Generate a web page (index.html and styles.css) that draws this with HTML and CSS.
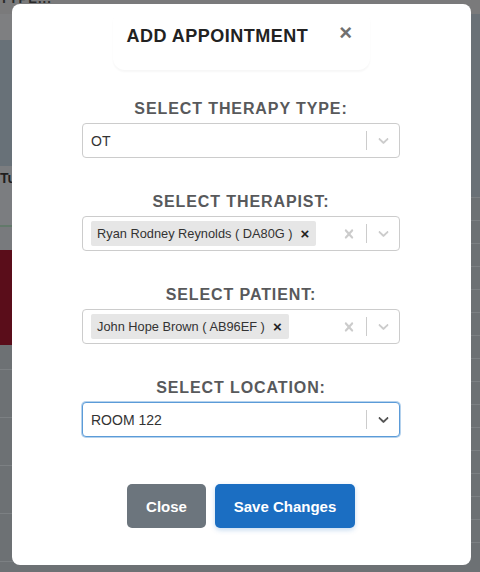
FILE: index.html
```html
<!DOCTYPE html>
<html lang="en">
<head>
<meta charset="utf-8">
<title>Add Appointment</title>
<link rel="stylesheet" href="styles.css">
</head>
<body>
<div class="page">
  <div class="col col-left">
    <div class="band b-top"><span class="toptext">TYPE...</span></div>
    <div class="band b1"></div>
    <div class="band b2"></div>
    <div class="band b3"><span class="tu">Tu</span></div>
    <div class="band b-line"></div>
    <div class="band b4"></div>
    <div class="band b-red"></div>
    <div class="band b5"></div>
    <div class="band row-l"></div>
    <div class="band row-l"></div>
    <div class="band row-l"></div>
    <div class="band row-l"></div>
    <div class="band row-l"></div>
  </div>
  <div class="col col-right">
    <div class="band b-top"></div>
    <div class="band r1"></div>
    <div class="band row-r"></div>
    <div class="band row-r"></div>
    <div class="band row-r"></div>
    <div class="band row-r"></div>
    <div class="band row-r"></div>
    <div class="band row-r"></div>
    <div class="band row-r"></div>
    <div class="band row-r"></div>
    <div class="band row-r"></div>
    <div class="band row-r"></div>
    <div class="band row-r"></div>
    <div class="band row-r"></div>
    <div class="band row-r"></div>
    <div class="band row-r"></div>
    <div class="band row-r"></div>
    <div class="band row-r"></div>
  </div>
</div>

<div class="modal">
  <div class="modal-header">
    <h2 class="title">ADD APPOINTMENT</h2>
    <span class="close-x">&times;</span>
  </div>

  <div class="fields">
    <div class="field">
      <div class="label">SELECT THERAPY TYPE:</div>
      <div class="select">
        <div class="value">OT</div>
        <div class="indicators">
          <span class="sep"></span>
          <span class="dropdown"><svg viewBox="0 0 20 20" class="chev"><path d="M4.516 7.548c0.436-0.446 1.043-0.481 1.576 0l3.908 3.747 3.908-3.747c0.533-0.481 1.141-0.446 1.574 0 0.436 0.445 0.408 1.197 0 1.615-0.406 0.418-4.695 4.502-4.695 4.502-0.217 0.223-0.502 0.335-0.787 0.335s-0.57-0.112-0.789-0.335c0 0-4.287-4.084-4.695-4.502s-0.436-1.17 0-1.615z"/></svg></span>
        </div>
      </div>
    </div>

    <div class="field">
      <div class="label">SELECT THERAPIST:</div>
      <div class="select">
        <div class="value multi"><span class="tag"><span class="tag-text">Ryan Rodney Reynolds ( DA80G )</span><span class="tag-x">&times;</span></span></div>
        <div class="indicators">
          <span class="clear"><svg viewBox="0 0 20 20" class="cross"><path d="M14.348 14.849c-0.469 0.469-1.229 0.469-1.697 0l-2.651-3.030-2.651 3.029c-0.469 0.469-1.229 0.469-1.697 0-0.469-0.469-0.469-1.229 0-1.697l2.758-3.150-2.759-3.152c-0.469-0.469-0.469-1.228 0-1.697s1.228-0.469 1.697 0l2.652 3.031 2.651-3.031c0.469-0.469 1.228-0.469 1.697 0s0.469 1.229 0 1.697l-2.758 3.152 2.758 3.150c0.469 0.469 0.469 1.229 0 1.698z"/></svg></span>
          <span class="sep"></span>
          <span class="dropdown"><svg viewBox="0 0 20 20" class="chev"><path d="M4.516 7.548c0.436-0.446 1.043-0.481 1.576 0l3.908 3.747 3.908-3.747c0.533-0.481 1.141-0.446 1.574 0 0.436 0.445 0.408 1.197 0 1.615-0.406 0.418-4.695 4.502-4.695 4.502-0.217 0.223-0.502 0.335-0.787 0.335s-0.57-0.112-0.789-0.335c0 0-4.287-4.084-4.695-4.502s-0.436-1.170 0-1.615z"/></svg></span>
        </div>
      </div>
    </div>

    <div class="field">
      <div class="label">SELECT PATIENT:</div>
      <div class="select">
        <div class="value multi"><span class="tag"><span class="tag-text">John Hope Brown ( AB96EF )</span><span class="tag-x">&times;</span></span></div>
        <div class="indicators">
          <span class="clear"><svg viewBox="0 0 20 20" class="cross"><path d="M14.348 14.849c-0.469 0.469-1.229 0.469-1.697 0l-2.651-3.030-2.651 3.029c-0.469 0.469-1.229 0.469-1.697 0-0.469-0.469-0.469-1.229 0-1.697l2.758-3.150-2.759-3.152c-0.469-0.469-0.469-1.228 0-1.697s1.228-0.469 1.697 0l2.652 3.031 2.651-3.031c0.469-0.469 1.228-0.469 1.697 0s0.469 1.229 0 1.697l-2.758 3.152 2.758 3.150c0.469 0.469 0.469 1.229 0 1.698z"/></svg></span>
          <span class="sep"></span>
          <span class="dropdown"><svg viewBox="0 0 20 20" class="chev"><path d="M4.516 7.548c0.436-0.446 1.043-0.481 1.576 0l3.908 3.747 3.908-3.747c0.533-0.481 1.141-0.446 1.574 0 0.436 0.445 0.408 1.197 0 1.615-0.406 0.418-4.695 4.502-4.695 4.502-0.217 0.223-0.502 0.335-0.787 0.335s-0.57-0.112-0.789-0.335c0 0-4.287-4.084-4.695-4.502s-0.436-1.170 0-1.615z"/></svg></span>
        </div>
      </div>
    </div>

    <div class="field">
      <div class="label">SELECT LOCATION:</div>
      <div class="select focused">
        <div class="value">ROOM 122</div>
        <div class="indicators">
          <span class="sep"></span>
          <span class="dropdown"><svg viewBox="0 0 20 20" class="chev"><path d="M4.516 7.548c0.436-0.446 1.043-0.481 1.576 0l3.908 3.747 3.908-3.747c0.533-0.481 1.141-0.446 1.574 0 0.436 0.445 0.408 1.197 0 1.615-0.406 0.418-4.695 4.502-4.695 4.502-0.217 0.223-0.502 0.335-0.787 0.335s-0.57-0.112-0.789-0.335c0 0-4.287-4.084-4.695-4.502s-0.436-1.170 0-1.615z"/></svg></span>
        </div>
      </div>
    </div>
  </div>

  <div class="actions">
    <button class="btn btn-secondary" type="button">Close</button>
    <button class="btn btn-primary" type="button">Save Changes</button>
  </div>
</div>
</body>
</html>
```

FILE: styles.css
```css
* { box-sizing: border-box; }

html, body {
  margin: 0;
  padding: 0;
  width: 480px;
  height: 572px;
  overflow: hidden;
  font-family: "Liberation Sans", Arial, sans-serif;
  background: #6d7174;
}

/* ---------- dimmed page behind the modal ---------- */
.page {
  display: flex;
  width: 480px;
  height: 572px;
}
.col {
  width: 240px;
  display: flex;
  flex-direction: column;
  overflow: hidden;
}
.band { flex: none; }
.b-top {
  height: 14px;
  background: #7a7a7b;
  overflow: hidden;
}
.toptext {
  display: block;
  margin-top: -8px;
  font-size: 13px;
  line-height: 14px;
  font-weight: bold;
  color: #2a2a2a;
  letter-spacing: 1px;
}
.b1 { height: 26px; background: #7e7f81; }
.b2 { height: 126px; background: #687178; }
.b3 {
  height: 59px;
  background: #7b7d80;
  padding-top: 3px;
}
.tu {
  font-size: 14px;
  font-weight: bold;
  color: #1f1f1f;
}
.b-line { height: 2px; background: #62796a; }
.b4 { height: 23px; background: #787a7d; }
.b-red { height: 95px; background: #5a0d1a; }
.b5 { height: 24px; background: #6d7174; }
.row-l {
  height: 48px;
  background: #6d7174;
  border-top: 1px solid #7c8083;
}
.r1 { height: 183px; background: #6a7177; }
.row-r {
  height: 23px;
  background: #6d7174;
  border-top: 1px solid #7c8083;
}

/* ---------- modal ---------- */
.modal {
  position: fixed;
  top: 4px;
  left: 12px;
  width: 459px;
  height: 561px;
  background: #ffffff;
  border-radius: 8px;
  display: flex;
  flex-direction: column;
  align-items: center;
  padding-top: 6px;
}

.modal-header {
  display: flex;
  align-items: flex-start;
  gap: 31px;
  width: 257px;
  height: 60px;
  padding: 15px 14px 0 14px;
  border-radius: 12px;
  box-shadow: 0 2px 2px rgba(0, 0, 0, 0.035);
  margin-right: 1px;
}
.title {
  margin: 0;
  font-size: 18px;
  line-height: 22px;
  font-weight: bold;
  letter-spacing: 0.5px;
  color: #222222;
  white-space: nowrap;
}
.close-x {
  font-size: 22px;
  line-height: 16px;
  font-weight: bold;
  color: #707070;
  margin-top: 0;
}

.fields {
  margin-top: 29px;
  display: flex;
  flex-direction: column;
  gap: 34px;
  width: 318px;
  margin-right: 1px;
}
.field {
  display: flex;
  flex-direction: column;
  align-items: center;
  gap: 4px;
}
.label {
  font-size: 16px;
  line-height: 20px;
  font-weight: bold;
  letter-spacing: 0.9px;
  color: #58595b;
  white-space: nowrap;
}

.select {
  width: 318px;
  height: 35px;
  border: 1px solid #cccccc;
  border-radius: 4px;
  display: flex;
  align-items: center;
  background: #ffffff;
}
.select.focused {
  border-color: #5b9bd8;
  box-shadow: 0 0 0 1px rgba(91, 155, 216, 0.45);
}
.value {
  flex: 1;
  padding-left: 8px;
  font-size: 14px;
  color: #333333;
}
.value.multi { display: flex; align-items: center; }
.tag {
  display: flex;
  align-items: center;
  height: 25px;
  background: #e6e6e6;
  border-radius: 2px;
  padding-left: 6px;
}
.tag-text {
  font-size: 12.8px;
  color: #333333;
  white-space: nowrap;
}
.tag-x {
  font-size: 15px;
  font-weight: bold;
  color: #222222;
  padding: 0 7px 0 8px;
  line-height: 15px;
}

.indicators {
  display: flex;
  align-items: center;
  height: 100%;
}
.clear {
  width: 34px;
  display: flex;
  justify-content: center;
}
.cross {
  width: 18px;
  height: 18px;
  fill: #cccccc;
}
.sep {
  width: 1px;
  height: 19px;
  background: #cccccc;
}
.dropdown {
  width: 32px;
  display: flex;
  justify-content: center;
}
.chev {
  width: 17px;
  height: 17px;
  fill: #cccccc;
}
.focused .chev { fill: #555555; }

/* ---------- buttons ---------- */
.actions {
  margin-top: 47px;
  display: flex;
  gap: 9px;
  margin-right: 1px;
}
.btn {
  height: 44px;
  border: none;
  border-radius: 5px;
  padding: 0;
  white-space: nowrap;
  font-family: "Liberation Sans", Arial, sans-serif;
  font-size: 15px;
  font-weight: bold;
  color: #ffffff;
}
.btn-secondary {
  width: 79px;
  background: #6c757d;
}
.btn-primary {
  width: 140px;
  background: #1b6ec2;
  box-shadow: 0 2px 5px rgba(27, 110, 194, 0.25);
}
```
